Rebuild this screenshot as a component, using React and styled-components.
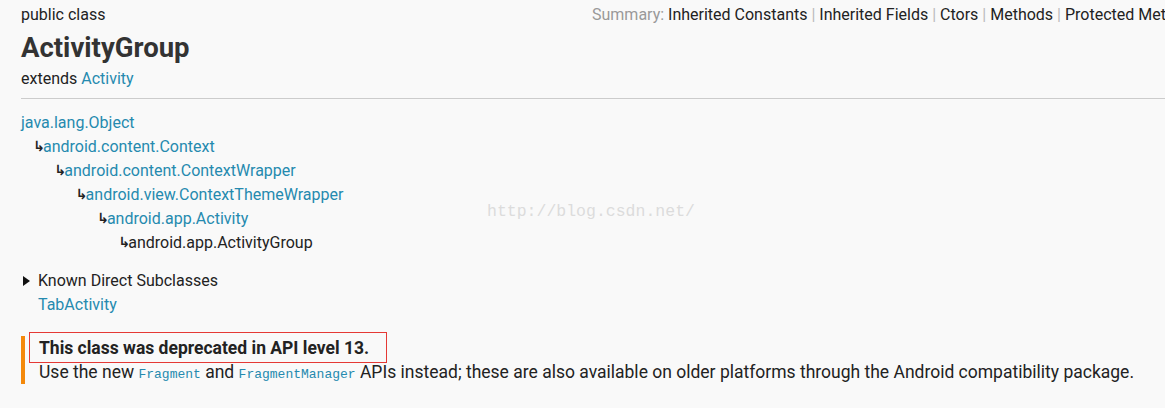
import React from "react";
import styled, { createGlobalStyle } from "styled-components";

const GlobalStyle = createGlobalStyle`
  body {
    margin: 0;
    background: #f9f9f9;
    font-family: Roboto, "Noto Sans", sans-serif;
    color: #222;
  }
`;

const Page = styled.div`
  position: relative;
  width: 1165px;
  height: 408px;
  overflow: hidden;
  padding-left: 21px;
  box-sizing: border-box;
`;

const Header = styled.div`
  display: grid;
  grid-template-columns: 571px 1fr;
  padding-top: 6px;
`;

const Kind = styled.div`
  font-size: 16px;
  line-height: 18px;
`;

const Nav = styled.div`
  font-size: 16px;
  line-height: 18px;
  white-space: pre;
  overflow: hidden;
  color: #222;
`;

const NavLabel = styled.span`
  color: #999;
`;

const Sep = styled.span`
  color: #bbb;
`;

const Title = styled.h1`
  margin: 6px 0 0;
  font-size: 27.5px;
  line-height: 36px;
  font-weight: 700;
  color: #333;
`;

const Extends = styled.div`
  font-size: 16px;
  line-height: 18px;
  margin-top: 4px;
`;

const Link = styled.a`
  color: #258aaf;
  text-decoration: none;
`;

const Rule = styled.hr`
  border: 0;
  border-top: 1px solid #ccc;
  margin: 10px 0 0;
`;

const Tree = styled.div`
  margin-top: 11px;
  font-size: 16px;
`;

const TreeRow = styled.div`
  display: flex;
  align-items: center;
  height: 24px;
  padding-left: ${p => (p.level ? 12 + (p.level - 1) * 21.3 : 0)}px;
  color: ${p => (p.current ? "#222" : "#258aaf")};
`;

const Arrow = styled.span`
  color: #222;
  font-size: 14px;
  line-height: 24px;
  width: 10px;
  font-weight: 700;
  font-family: "DejaVu Sans", sans-serif;
`;

const Subclasses = styled.div`
  margin-top: 15px;
  font-size: 16px;
  line-height: 24px;
`;

const Toggle = styled.div`
  display: flex;
  align-items: center;
  gap: 8px;
`;

const Triangle = styled.span`
  width: 0;
  height: 0;
  border-top: 5px solid transparent;
  border-bottom: 5px solid transparent;
  border-left: 7px solid #111;
  margin-left: 2px;
`;

const SubList = styled.div`
  padding-left: 17px;
`;

const Deprecated = styled.div`
  margin-top: 19px;
  border-left: 4px solid #f4890b;
  padding: 0 0 0 14px;
  font-size: 17.5px;
  line-height: 24px;
  height: 48px;
  box-sizing: border-box;
  white-space: nowrap;
`;

const Warning = styled.div`
  position: relative;
  font-weight: 700;
  color: #222;
  &::after {
    content: "";
    position: absolute;
    left: -10px;
    top: -4px;
    width: 358px;
    height: 31px;
    border: 1px solid #e53935;
    box-sizing: border-box;
  }
`;

const Code = styled.code`
  font-family: "Liberation Mono", "Courier New", monospace;
  font-size: 13px;
  color: #258aaf;
`;

const Watermark = styled.div`
  position: absolute;
  left: 487px;
  top: 202px;
  font-family: "Liberation Mono", monospace;
  font-size: 16.5px;
  color: #dcdcdc;
  pointer-events: none;
`;

const hierarchy = [
  "java.lang.Object",
  "android.content.Context",
  "android.content.ContextWrapper",
  "android.view.ContextThemeWrapper",
  "android.app.Activity",
  "android.app.ActivityGroup",
];

const navItems = [
  "Inherited Constants",
  "Inherited Fields",
  "Ctors",
  "Methods",
  "Protected Methods",
];

export default function App() {
  return (
    <Page>
      <GlobalStyle />
      <Header>
        <Kind>public class</Kind>
        <Nav>
          <NavLabel>Summary: </NavLabel>
          {navItems.map((item, i) => (
            <React.Fragment key={item}>
              {i > 0 && <Sep> | </Sep>}
              {item}
            </React.Fragment>
          ))}
        </Nav>
      </Header>
      <Title>ActivityGroup</Title>
      <Extends>
        extends <Link>Activity</Link>
      </Extends>
      <Rule />
      <Tree>
        {hierarchy.map((name, i) => (
          <TreeRow key={name} level={i} current={i === hierarchy.length - 1}>
            {i > 0 && <Arrow>↳</Arrow>}
            {name}
          </TreeRow>
        ))}
      </Tree>
      <Subclasses>
        <Toggle>
          <Triangle />
          Known Direct Subclasses
        </Toggle>
        <SubList>
          <Link>TabActivity</Link>
        </SubList>
      </Subclasses>
      <Deprecated>
        <Warning>This class was deprecated in API level 13.</Warning>
        <div>
          Use the new <Code>Fragment</Code> and <Code>FragmentManager</Code> APIs
          instead; these are also available on older platforms through the
          Android compatibility package.
        </div>
      </Deprecated>
      <Watermark>http://blog.csdn.net/</Watermark>
    </Page>
  );
}
